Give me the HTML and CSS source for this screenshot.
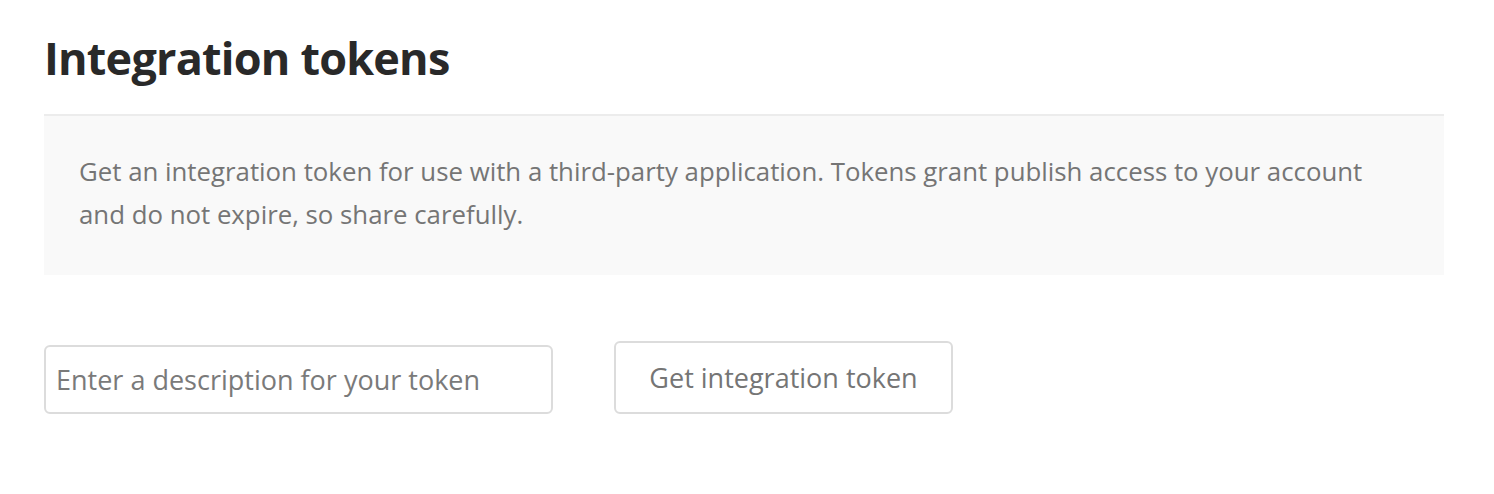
FILE: index.html
```html
<!DOCTYPE html>
<html>
<head>
<meta charset="utf-8">
<link rel="stylesheet" href="styles.css">
</head>
<body>
<main class="page">
  <h1 class="title">Integration tokens</h1>
  <section class="notice">
    <p>Get an integration token for use with a third-party application. Tokens grant publish access to your account and do not expire, so share carefully.</p>
  </section>
  <form class="token-form">
    <input class="token-input" type="text" placeholder="Enter a description for your token">
    <button class="token-button" type="button">Get integration token</button>
  </form>
</main>
</body>
</html>
```
FILE: styles.css
```css
html, body {
  margin: 0;
  padding: 0;
  background: #fff;
}
body {
  font-family: "Open Sans", "Liberation Sans", sans-serif;
}
.page {
  padding: 28px 50px 0 44px;
}
.title {
  margin: 0;
  font-size: 45px;
  line-height: 60px;
  font-weight: 700;
  color: #292929;
  letter-spacing: -0.8px;
  padding-bottom: 26px;
}
.notice {
  border-top: 2px solid #ececec;
  background: #f9f9f9;
  padding: 34px 35px 39px;
}
.notice p {
  margin: 0;
  font-size: 25.8px;
  line-height: 43px;
  color: #757575;
  max-width: 1300px;
}
.token-form {
  display: flex;
  align-items: flex-end;
  gap: 61px;
  margin-top: 66px;
}
.token-input {
  box-sizing: border-box;
  width: 509px;
  height: 69px;
  border: 2px solid #dcdcdc;
  border-radius: 6px;
  padding: 0 10px;
  font-family: inherit;
  font-size: 27px;
  color: #333;
  outline: none;
}
.token-input::placeholder {
  color: #7a7a7a;
}
.token-button {
  box-sizing: border-box;
  width: 339px;
  height: 73px;
  border: 2px solid #dcdcdc;
  border-radius: 6px;
  background: #fff;
  font-family: inherit;
  font-size: 27px;
  color: #757575;
  cursor: pointer;
}
```
